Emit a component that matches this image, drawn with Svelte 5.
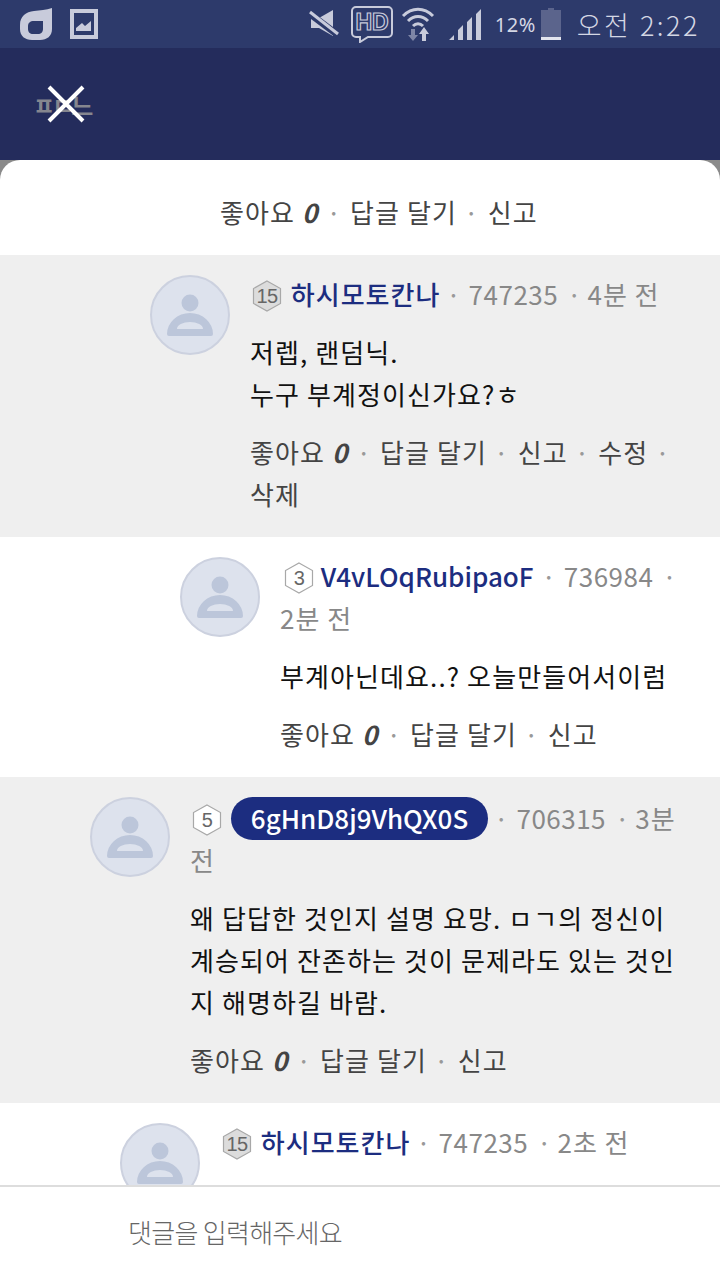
<script>
  const comments = [
    { indent: 150, level: 15, filled: true, name: '하시모토칸나', id: '747235', time: '4분 전', shaded: true,
      body: ['저렙, 랜덤닉.', '누구 부계정이신가요?ㅎ'], actions: ['답글 달기', '신고', '수정', '삭제'] },
    { indent: 180, level: 3, name: 'V4vLOqRubipaoF', latin: true, id: '736984', time: '2분 전',
      body: ['부계아닌데요..? 오늘만들어서이럼'], actions: ['답글 달기', '신고'] },
    { indent: 90, level: 5, name: '6gHnD8j9VhQX0S', latin: true, pill: true, id: '706315', time: '3분 전', shaded: true,
      body: ['왜 답답한 것인지 설명 요망. ㅁㄱ의 정신이', '계승되어 잔존하는 것이 문제라도 있는 것인', '지 해명하길 바람.'], actions: ['답글 달기', '신고'] },
    { indent: 120, level: 15, filled: true, name: '하시모토칸나', id: '747235', time: '2초 전', body: [], actions: [] }
  ];
</script>

{#snippet actionRow(items)}
  <div class="actions">
    <span class="action">좋아요 <b>0</b></span>
    {#each items as item}
      <span class="dot">·</span> <span class="action">{item}</span>
    {/each}
  </div>
{/snippet}

<div class="screen">
  <div class="status">
    <div class="status-left">
      <svg width="32" height="32" viewBox="0 0 32 32"><path d="M32 0v21c0 7-5 11-12 11h-8C5 32 0 28 0 21v-4C0 8 6 4 14 3c6-1 12-1 18-3zM14 13c-4 0-6 2-6 5v3c0 3 2 5 5 5h5c3 0 5-2 5-5v-8z" fill="#c8cbdb" fill-rule="evenodd"/></svg>
      <svg width="28" height="30" viewBox="0 0 28 30"><path d="M0 0h28v30H0zM4 4v22h20V4z" fill="#c8cbdb" fill-rule="evenodd"/><path d="M6 22v-3l6-5 3 3 6-5v10z" fill="#c8cbdb"/></svg>
    </div>
    <div class="status-right">
      <svg class="mute" width="30" height="30" viewBox="0 0 30 30"><path d="M2 9h8L24 1v26L10 19H2z" fill="#c8cbdb"/><path d="M1 5l28 21" stroke="#2d3a6b" stroke-width="7"/><path d="M1 3l28 22" stroke="#c8cbdb" stroke-width="3"/></svg>
      <svg class="hdi" width="44" height="38" viewBox="0 0 44 38"><path d="M6 2h32a4 4 0 0 1 4 4v22a4 4 0 0 1-4 4H18l-8 5v-5H6a4 4 0 0 1-4-4V6a4 4 0 0 1 4-4z" fill="none" stroke="#c8cbdb" stroke-width="2"/><text x="22" y="25" text-anchor="middle" class="hd">HD</text></svg>
      <svg class="wifi" width="34" height="36" viewBox="0 0 34 36"><path d="M2 10c9-9 21-9 30 0M7 15c6-6 14-6 20 0M12 20c3-3 7-3 10 0" fill="none" stroke="#c8cbdb" stroke-width="3"/><path d="M10 23h4v6h3l-5 6-5-6h3z" fill="#7e86a6"/><path d="M21 35v-7h-3l5-7 5 7h-3v7z" fill="#c8cbdb"/></svg>
      <svg class="signal" width="34" height="32" viewBox="0 0 34 32"><path d="M1 32l5-5v5zM10 32v-10l5-5v15zM19 32V14l5-5v23zM28 32V6l5-5v31z" fill="#c8cbdb"/></svg>
      <span class="pct">12%</span>
      <svg class="batt" width="20" height="32" viewBox="0 0 20 32"><path d="M7 0h6v2h7v30H0V2h7z" fill="#5b648c"/><path d="M0 29h20v3H0z" fill="#e3e5ee"/></svg>
      <span class="clock">오전 2:22</span>
    </div>
  </div>

  <div class="header">
    <div class="close">
      <span class="under">ㅍㄷ느</span>
      <svg class="x" width="38" height="38" viewBox="0 0 38 38"><path d="M2 2l34 34M36 2L2 36" stroke="#fff" stroke-width="4"/></svg>
    </div>
  </div>

  <div class="sheet">
    <div class="list">
      <div class="top-actions">{@render actionRow(['답글 달기', '신고'])}</div>
      {#each comments as c}
        <div class="comment" class:shaded={c.shaded} style="padding-left: {c.indent}px">
          <div class="avatar">
            <svg width="76" height="76" viewBox="0 0 76 76"><circle cx="38" cy="26" r="8.500" fill="#bcc6da"/><path d="M15 57a23 21 0 0 1 46 0 2 2 0 0 1-2 2H17a2 2 0 0 1-2-2zM25 52h26a13 7 0 0 0-26 0z" fill="#bcc6da" fill-rule="evenodd"/></svg>
          </div>
          <div class="content">
            <div class="meta" class:tall={c.pill}>
              <svg class="hex" class:narrow={c.level === 3} width="30" height="32" viewBox="0 0 30 32"><path d="M15 1l13.500 7.500v15L15 31 1.500 23.500v-15z" fill={c.filled ? '#dcdcdc' : '#fff'} stroke="#a8a8a8" stroke-width="1.200"/><text x="15" y="23" text-anchor="middle" class="lvl">{c.level}</text></svg>
              <span class="name" class:pill={c.pill} class:latin={c.latin}>{c.name}</span>
              <span class="sep">·</span> <span class="id">{c.id}</span> <span class="sep second">·</span> {c.time}
            </div>
            {#if c.body.length}
              <div class="body">
                {#each c.body as line}<div>{line}</div>{/each}
              </div>
              {@render actionRow(c.actions)}
            {/if}
          </div>
        </div>
      {/each}
    </div>
    <div class="input-bar">댓글을 입력해주세요</div>
  </div>
</div>

<style>
  :global(body) {
    margin: 0;
    background: #8a8a8a;
  }

  .screen {
    width: 720px;
    height: 1280px;
    display: flex;
    flex-direction: column;
    overflow: hidden;
    font-family: "Noto Sans CJK KR", "Noto Sans", sans-serif;
    background: #8a8a8a;
  }

  .status {
    height: 48px;
    flex-shrink: 0;
    background: #2d3a6b;
    display: flex;
    justify-content: space-between;
    align-items: center;
    padding: 0 20px 0 20px;
  }

  .status-left, .status-right {
    display: flex;
    align-items: center;
  }

  .status-left { gap: 18px; }

  .hdi { margin-left: 11px; }
  .wifi { margin-left: 7px; }
  .signal { margin-left: 13px; }

  .hd {
    font: 700 23px "Liberation Sans", sans-serif;
    fill: none;
    stroke: #c8cbdb;
    stroke-width: 1.200;
  }

  .pct {
    font: 20px "Noto Sans", sans-serif;
    color: #d4d7e4;
    letter-spacing: 0.5px;
    margin-left: 13px;
  }

  .batt { margin-left: 5px; }

  .clock {
    font-size: 27px;
    font-weight: 300;
    color: #d4d7e4;
    letter-spacing: 2.500px;
    margin-left: 16px;
  }

  .header {
    height: 112px;
    flex-shrink: 0;
    background: #242c5c;
    display: flex;
    align-items: center;
    padding-left: 33px;
  }

  .close {
    position: relative;
    width: 59px;
    height: 38px;
    display: flex;
    align-items: center;
  }

  .under {
    font-size: 24px;
    font-weight: 700;
    color: #85868f;
    letter-spacing: -3px;
    white-space: nowrap;
  }

  .x {
    position: absolute;
    left: 14px;
    top: 0;
  }

  .sheet {
    flex: 1;
    min-height: 0;
    display: flex;
    flex-direction: column;
    background: #fff;
    border-radius: 20px 20px 0 0;
    overflow: hidden;
  }

  .list {
    flex: 1;
    min-height: 0;
    overflow: hidden;
  }

  .top-actions {
    height: 95px;
    box-sizing: border-box;
    padding: 31px 0 0 220px;
  }

  .comment {
    display: flex;
    gap: 20px;
    padding: 20px 40px 22px 0;
  }

  .shaded { background: #efefef; }

  .avatar {
    width: 80px;
    height: 80px;
    flex-shrink: 0;
    box-sizing: border-box;
    border: 2px solid #ccd1df;
    border-radius: 50%;
    background: #dde2ed;
  }

  .content {
    flex: 1;
    min-width: 0;
    margin-top: -2px;
  }

  .meta {
    font-size: 26px;
    line-height: 42px;
    color: #888;
    letter-spacing: 1px;
  }

  .meta.tall { padding-top: 2px; }

  .id { letter-spacing: 0.500px; }

  .hex {
    vertical-align: -7px;
    margin-left: 2px;
    margin-right: 2px;
  }

  .hex.narrow {
    margin-left: 4px;
    margin-right: 0;
  }

  .lvl {
    font: 20px "Liberation Sans", sans-serif;
    letter-spacing: -0.500px;
    fill: #666;
  }

  .name {
    font-weight: 500;
    color: #1c2d80;
    margin-right: -1px;
  }

  .name.latin {
    letter-spacing: 0;
    margin-right: 1px;
  }

  .name.pill {
    background: #1c2d80;
    color: #fff;
    border-radius: 22px;
    padding: 2px 20px 4px;
    margin-right: -1px;
  }

  .sep { color: #999; }

  .sep.second {
    margin-left: 2px;
    margin-right: -2px;
  }

  .body {
    margin-top: 16px;
    font-size: 26px;
    line-height: 42px;
    letter-spacing: 1.100px;
    color: #111;
  }

  .actions {
    margin-top: 16px;
    font-size: 26px;
    line-height: 42px;
    letter-spacing: 1.100px;
    color: #444;
  }

  .top-actions .actions { margin-top: 0; }

  .action b {
    font-style: italic;
    font-weight: 700;
    margin-right: -6px;
  }

  .dot {
    color: #999;
    margin: 0 1px 0 7px;
  }

  .input-bar {
    height: 95px;
    flex-shrink: 0;
    box-sizing: border-box;
    border-top: 2px solid #ddd;
    background: #fff;
    padding: 25px 0 0 128px;
    font-size: 26px;
    font-weight: 300;
    letter-spacing: -0.700px;
    color: #666;
    line-height: 40px;
  }
</style>
